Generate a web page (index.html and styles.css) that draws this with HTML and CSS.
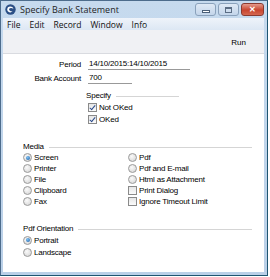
FILE: index.html
```html
<!DOCTYPE html>
<html lang="en">
<head>
    <meta charset="UTF-8">
    <title>Specify Bank Statement</title>
    <link rel="stylesheet" href="styles.css">
</head>
<body>
    <div class="window">
        <div class="titlebar">
            <svg class="app-icon" width="11" height="11" viewBox="0 0 11 11">
                <circle cx="5.5" cy="5.5" r="5.2" fill="#2b4f86"/>
                <path d="M3 3.2 C5 2 8 2.6 8.4 5 C7.4 3.8 5 3.6 4.2 4.8 C3.6 6 4.8 7.4 7.6 7.6 C6 9 3 8.6 2.4 6.6 C2 5.2 2.4 4 3 3.2 Z" fill="#fff"/>
            </svg>
            <span class="title">Specify Bank Statement</span>
            <div class="controls">
                <div class="ctl min"><span></span></div>
                <div class="ctl max"><span></span></div>
                <div class="ctl close">&#x2715;</div>
            </div>
        </div>

        <div class="menubar">
            <span>File</span>
            <span>Edit</span>
            <span>Record</span>
            <span>Window</span>
            <span>Info</span>
        </div>

        <div class="toolbar">
            <span class="run">Run</span>
        </div>

        <div class="content">
            <div class="fields">
                <label>Period</label>
                <div class="field wide">14/10/2015:14/10/2015</div>
                <label>Bank Account</label>
                <div class="field short">700</div>
            </div>

            <div class="specify">
                <div class="group-head">Specify<span class="rule"></span></div>
                <div class="opt"><span class="check on"></span>Not OKed</div>
                <div class="opt"><span class="check on"></span>OKed</div>
            </div>

            <div class="section">
                <div class="group-head">Media<span class="rule"></span></div>
                <div class="cols">
                    <div class="col">
                        <div class="opt"><span class="radio on"></span>Screen</div>
                        <div class="opt"><span class="radio"></span>Printer</div>
                        <div class="opt"><span class="radio"></span>File</div>
                        <div class="opt"><span class="radio"></span>Clipboard</div>
                        <div class="opt"><span class="radio"></span>Fax</div>
                    </div>
                    <div class="col">
                        <div class="opt"><span class="radio"></span>Pdf</div>
                        <div class="opt"><span class="radio"></span>Pdf and E-mail</div>
                        <div class="opt"><span class="radio"></span>Html as Attachment</div>
                        <div class="opt"><span class="check"></span>Print Dialog</div>
                        <div class="opt"><span class="check"></span>Ignore Timeout Limit</div>
                    </div>
                </div>
            </div>

            <div class="section orient">
                <div class="group-head">Pdf Orientation<span class="rule"></span></div>
                <div class="opt"><span class="radio on"></span>Portrait</div>
                <div class="opt"><span class="radio"></span>Landscape</div>
            </div>
        </div>
    </div>
</body>
</html>
```

FILE: styles.css
```css
* {
    margin: 0;
    padding: 0;
    box-sizing: border-box;
}

body {
    font-family: "Liberation Sans", Arial, sans-serif;
    font-size: 8px;
    color: #000;
    background-color: #fff;
    width: 270px;
    height: 277px;
    overflow: hidden;
}

.window {
    width: 268px;
    height: 276px;
    display: flex;
    flex-direction: column;
    background: linear-gradient(#c6daee, #bad0e8);
    border: 1px solid #4d6c8c;
    border-right-color: #1f5672;
    border-bottom-color: #1f5672;
    padding: 0 3px 3px 2px;
}

/* barre de titre */
.titlebar {
    height: 17px;
    display: flex;
    align-items: center;
    padding-left: 2px;
}

.app-icon {
    margin-right: 4px;
}

.title {
    font-family: "Open Sans", "Liberation Sans", sans-serif;
    font-size: 9px;
    color: #1e1e1e;
    flex: 1;
}

.controls {
    display: flex;
    align-self: flex-start;
    margin-top: 2px;
}

.ctl {
    width: 21px;
    height: 13px;
    border: 1px solid #8aa1bb;
    border-radius: 3px;
    background: linear-gradient(#dfe9f5, #c3d5ea);
    display: flex;
    align-items: center;
    justify-content: center;
    margin-left: 2px;
}

.ctl.min span {
    width: 8px;
    height: 3px;
    margin-top: 4px;
    border: 1px solid #4b5f78;
    background: #fff;
}

.ctl.max span {
    width: 7px;
    height: 6px;
    border: 1px solid #5b6d84;
    border-top-width: 2px;
}

.ctl.close {
    width: 23px;
    border-color: #8a3a30;
    background: linear-gradient(#e59a8b, #c8452f 55%, #d46750);
    color: #fff;
    font-size: 8px;
    font-weight: bold;
}

/* menu */
.menubar {
    height: 12px;
    display: flex;
    align-items: center;
    background: linear-gradient(#eef3fa, #dce7f4);
    font-family: "Open Sans", "Liberation Sans", sans-serif;
    font-size: 8.5px;
    color: #111;
    padding-left: 4px;
}

.menubar span {
    margin-right: 9px;
}

.toolbar {
    height: 24px;
    background-color: #f0f1f4;
    border-bottom: 1px solid #d9dbe0;
    display: flex;
    justify-content: flex-end;
    align-items: center;
    padding: 2px 18px 0 0;
}

/* contenu */
.content {
    flex: 1;
    background-color: #fff;
    padding-top: 5px;
    letter-spacing: -0.2px;
}

.fields {
    display: grid;
    grid-template-columns: 78px auto;
    column-gap: 7px;
    row-gap: 3px;
    align-items: end;
}

.fields label {
    text-align: right;
    line-height: 10px;
}

.field {
    line-height: 10px;
    border-bottom: 1px solid #999;
    padding-left: 1px;
}

.field.wide {
    width: 102px;
}

.field.short {
    width: 44px;
}

.specify {
    margin: 6px 0 0 83px;
    width: 93px;
}

.group-head {
    display: flex;
    align-items: center;
    line-height: 11px;
}

.rule {
    flex: 1;
    height: 1px;
    background-color: #d5d5d5;
    margin: 2px 0 0 5px;
}

.opt {
    display: flex;
    align-items: center;
    height: 11px;
}

.specify .opt {
    height: 12px;
    margin-left: 2px;
}

.section {
    margin: 16px 12px 0 20px;
}

.cols {
    display: flex;
}

.col {
    width: 105px;
}

.radio {
    width: 9px;
    height: 9px;
    border-radius: 50%;
    border: 1px solid #9a9a9a;
    background: radial-gradient(circle at 40% 35%, #fafafa, #d2d2d2);
    margin-right: 2px;
    position: relative;
}

.radio.on::after {
    content: "";
    position: absolute;
    left: 1.5px;
    top: 1.5px;
    width: 4px;
    height: 4px;
    border-radius: 50%;
    background: radial-gradient(circle at 40% 35%, #7ec0f0, #1a5ea8);
}

.check {
    width: 9px;
    height: 9px;
    border: 1px solid #8a8a8a;
    background: linear-gradient(#e6e6e6, #fbfbfb);
    margin-right: 2px;
    position: relative;
}

.check.on::after {
    content: "";
    position: absolute;
    left: 2px;
    top: 0;
    width: 2px;
    height: 5px;
    border: solid #2a4a8a;
    border-width: 0 1.5px 1.5px 0;
    transform: rotate(40deg);
}

.orient .opt {
    height: 12px;
}
```
